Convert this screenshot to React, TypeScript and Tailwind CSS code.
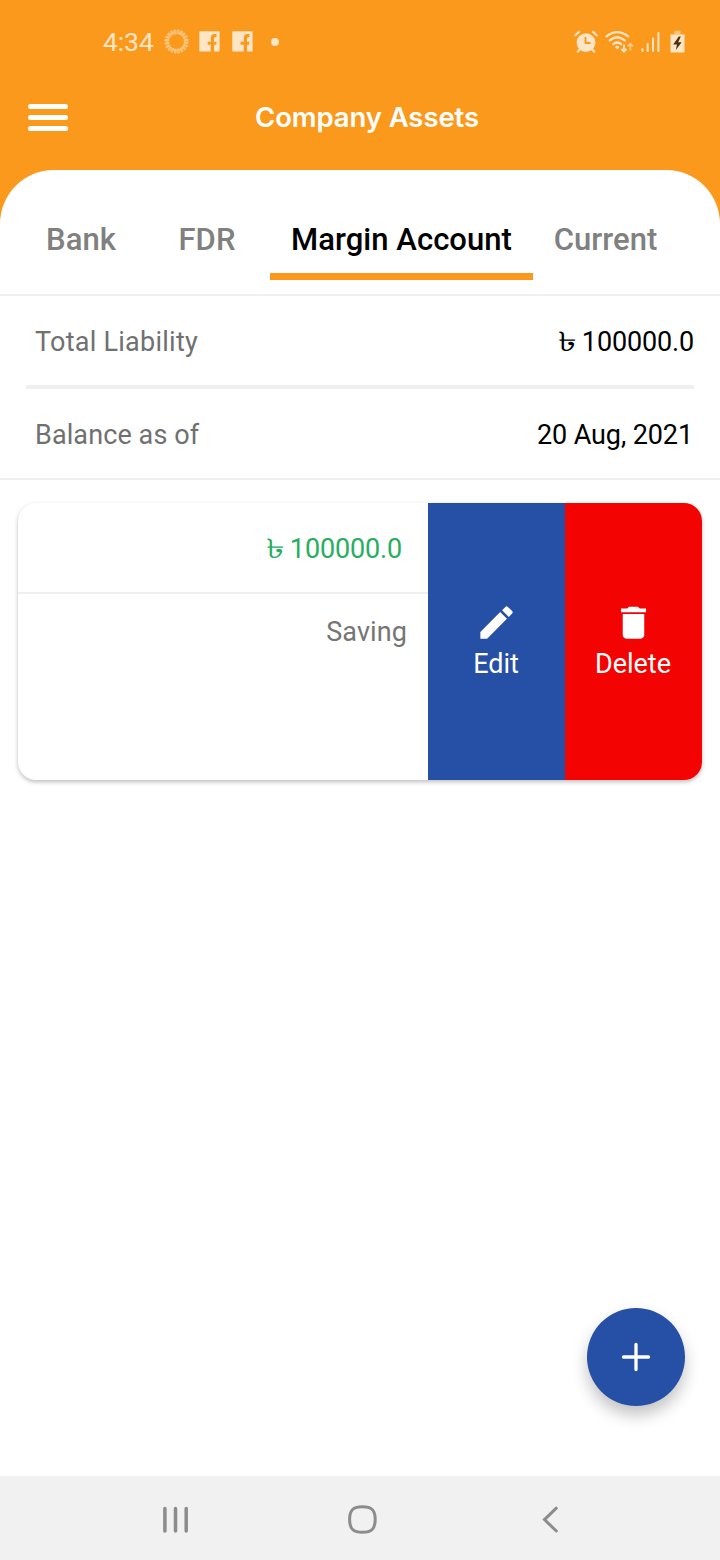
import React from "react";

const tabs = [
  { label: "Bank", width: "w-[126px]", active: false },
  { label: "FDR", width: "w-[126px]", active: false },
  { label: "Margin Account", width: "w-[263px]", active: true },
  { label: "Current", width: "w-[145px]", active: false },
];

function FacebookIcon() {
  return (
    <svg width="21" height="21" viewBox="0 0 21 21" className="shrink-0">
      <path
        fill="#fde5c6"
        d="M1 0.3H20Q20.6 0.3 20.6 1V20Q20.6 20.600 20 20.600H15V13.800H17.100L17.500 10.800H15V8.300Q15 6 16.200 6H17.500V3.100H15.500Q11.800 3.100 11.800 7.300V10.800H8.600V13.800H11.800V20.600H1Q0.300 20.600 0.300 20V1Q0.300 0.300 1 0.300Z"
      />
    </svg>
  );
}

function Amount({ value }: { value: string }) {
  return (
    <span className="whitespace-nowrap tracking-[-0.15px]">
      <span className="-mr-px inline-block origin-right scale-x-[1.4]">৳</span> {value}
    </span>
  );
}

function StatusBar() {
  return (
    <div className="flex h-[84px] items-center pb-px pl-[103px] pr-[35px] text-[#fde5c6]">
      <span className="w-[61px] text-[26.5px] leading-8 tracking-[-0.1px]">4:34</span>
      <svg width="25" height="25" viewBox="0 0 25 25" className="mr-[10px] shrink-0">
        <circle cx="12.5" cy="12.5" r="9.7" fill="none" stroke="#fcc67f" strokeWidth="4.8" strokeDasharray="2.1 0.947" />
        <circle cx="12.5" cy="12.5" r="9.1" fill="none" stroke="#fcc67f" strokeWidth="2.2" opacity="0.6" />
      </svg>
      <FacebookIcon />
      <div className="w-3" />
      <FacebookIcon />
      <div className="ml-[18px] size-2 rounded-full bg-[#fde5c6]" />
      <div className="grow" />
      <svg width="24" height="24" viewBox="0 0 24 24" className="mr-[7px] shrink-0">
        <circle cx="12" cy="12.6" r="9.4" fill="#fde5c6" />
        <path d="M1.400 5.200L5 1.800M22.600 5.200L19 1.800M5.800 19.200L3.800 21.600M18.200 19.200L20.200 21.600" stroke="#fde5c6" strokeWidth="2.2" strokeLinecap="round" />
        <path d="M11.500 7V13H16.500" fill="none" stroke="#fa991c" strokeWidth="1.9" />
      </svg>
      <svg width="29" height="24" viewBox="0 0 29 24" className="mr-[7px] shrink-0">
        <g fill="none" stroke="#fde5c6" strokeWidth="2.3" strokeLinecap="round">
          <path d="M1.500 6.400Q12 -2.200 23.200 6.400" />
          <path d="M4.800 10.400Q12 4 19.800 10.400" />
          <path d="M8.300 14.100Q12.200 10.800 16.200 14.100" />
        </g>
        <circle cx="12.200" cy="17.200" r="1.800" fill="#fde5c6" />
        <path d="M19 14.500V21.500M16.400 18.800L19 21.600L21.600 18.800" fill="none" stroke="#fde5c6" strokeWidth="1.800" />
        <path d="M25.400 20.500V14M22.800 16.400L25.400 13.600L28 16.400" fill="none" stroke="#fcc67f" strokeWidth="1.800" />
      </svg>
      <svg width="19" height="22" viewBox="0 0 19 22" className="mr-[10px] shrink-0">
        <path d="M1.400 18.200V20M6.700 13V20M12 7.600V20M17.400 2V20" stroke="#fde5c6" strokeWidth="2" strokeLinecap="round" />
      </svg>
      <svg width="15" height="23" viewBox="0 0 15 23" className="shrink-0">
        <path d="M4.500 0.800H10.500V4H14.500V7H0.500V4H4.500Z" fill="#fcc67f" />
        <path d="M0.500 5H14.500V21.800Q14.500 22.600 13.700 22.600H1.300Q0.500 22.600 0.500 21.800Z" fill="#fde5c6" />
        <path d="M8.800 6.500L3.200 14.600H7L5.800 20L11.700 12.200H8.200L10.800 6.500Z" fill="#4a300d" />
      </svg>
    </div>
  );
}

function AppBar() {
  return (
    <div className="flex h-[86px] items-start pl-[28px]">
      <button aria-label="Menu" className="mt-5 flex w-10 shrink-0 flex-col gap-[6px]">
        <span className="h-[5px] rounded-full bg-white" />
        <span className="h-[5px] rounded-full bg-white" />
        <span className="h-[5px] rounded-full bg-white" />
      </button>
      <h1 className="ml-[187px] mt-[17px] whitespace-nowrap font-['Inter',sans-serif] text-[27.5px] font-semibold leading-8 tracking-[-0.1px] text-white">
        Company Assets
      </h1>
    </div>
  );
}

export default function App() {
  return (
    <div className="flex h-[1560px] w-[720px] flex-col overflow-hidden bg-[#fa991c] font-['Roboto',sans-serif] text-[27px] leading-8">
      <StatusBar />
      <AppBar />
      <main className="flex grow flex-col rounded-t-[54px] bg-white">
        <nav className="flex h-[126px] items-end border-b-2 border-[#efefef] pb-[14px] pl-[18px] text-[31px] font-medium">
          {tabs.map((t) => (
            <div key={t.label} className={`flex h-[60px] shrink-0 flex-col items-center justify-between whitespace-nowrap ${t.width} ${t.active ? "text-black" : "text-[#808080]"}`}>
              <span className="leading-10 tracking-[0.05px]">{t.label}</span>
              <span className={`h-[7px] w-full ${t.active ? "bg-[#fa991c]" : ""}`} />
            </div>
          ))}
        </nav>
        <div className="mx-[26px] flex h-[93px] items-center justify-between border-b-4 border-[#efefef] pl-[9px] pt-[2px]">
          <span className="tracking-[0.25px] text-[#707070]">Total Liability</span>
          <span className="text-black"><Amount value="100000.0" /></span>
        </div>
        <div className="flex h-[91px] items-center justify-between border-b-2 border-[#efefef] pl-[35px] pr-[27px] pt-[2px]">
          <span className="tracking-[0.1px] text-[#707070]">Balance as of</span>
          <span className="tracking-[-0.1px] text-black">20 Aug, 2021</span>
        </div>
        <section className="mx-[18px] mt-[23px] flex h-[277px] overflow-hidden rounded-[18px] bg-white shadow-[0_2px_4px_rgba(0,0,0,0.26)]">
          <div className="flex w-[410px] flex-col">
            <div className="flex h-[91px] items-center justify-end border-b-2 border-[#efefef] pr-[26px] pt-[2px] text-[#27ae60]"><Amount value="100000.0" /></div>
            <div className="flex justify-end pr-[21px] pt-[22px] tracking-[0.1px] text-[#757575]">Saving</div>
          </div>
          <button className="flex w-[137px] flex-col items-center bg-[#2650a5] pr-px pt-[98px] text-white">
            <svg width="43" height="43" viewBox="0 0 24 24" fill="currentColor">
              <path d="M3 17.25V21h3.75L17.81 9.94l-3.75-3.75L3 17.25zM20.71 7.04c.39-.39.39-1.02 0-1.41l-2.34-2.34a.996.996 0 0 0-1.41 0l-1.83 1.83 3.75 3.75 1.83-1.83z" />
            </svg>
            <span className="mt-1">Edit</span>
          </button>
          <button className="flex w-[137px] flex-col items-center bg-[#f40303] pr-px pt-[98px] text-white">
            <svg width="43" height="43" viewBox="0 0 24 24" fill="currentColor">
              <path d="M6 7.300V19c0 1.100.9 2 2 2h8c1.100 0 2-.9 2-2V7.300zM19 4.200h-3.500l-1-1h-5l-1 1H5v2.100h14z" />
            </svg>
            <span className="mt-1">Delete</span>
          </button>
        </section>
        <div className="mt-auto flex justify-end pb-[70px] pr-[35px]">
          <button aria-label="Add" className="flex size-[98px] items-center justify-center rounded-full bg-[#2650a5] shadow-[0_9px_16px_rgba(0,0,0,0.24)]">
            <svg width="30" height="30" viewBox="0 0 30 30">
              <path d="M15 2.500V27.500M2.500 15H27.500" stroke="white" strokeWidth="3.300" strokeLinecap="round" />
            </svg>
          </button>
        </div>
      </main>
      <footer className="flex h-[84px] shrink-0 items-center bg-[#f1f1f1] pl-[162px] pt-[3px]">
        <svg width="27" height="28" viewBox="0 0 27 28" className="mr-[158px]">
          <path d="M2.900 2.500V25M13.500 2.500V25M24.200 2.500V25" stroke="#8c8c8c" strokeWidth="3.500" strokeLinecap="round" />
        </svg>
        <svg width="30" height="30" viewBox="0 0 30 30" className="mr-[164px]">
          <path d="M15.400 1.700C24.400 1.700 28.200 5 28.200 14.500S24.400 27.300 15.400 27.300 2.600 24 2.600 14.500 6.400 1.700 15.400 1.700Z" fill="none" stroke="#8c8c8c" strokeWidth="3" />
        </svg>
        <svg width="18" height="28" viewBox="0 0 18 28">
          <path d="M15.300 2.200L3.500 13.600L15.300 25" fill="none" stroke="#8c8c8c" strokeWidth="3" strokeLinecap="round" />
        </svg>
      </footer>
    </div>
  );
}
